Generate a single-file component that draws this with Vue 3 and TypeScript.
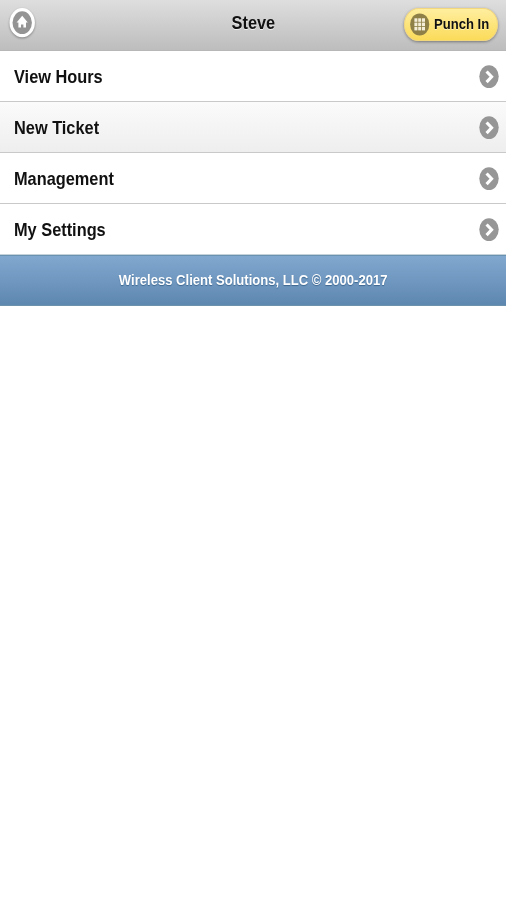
<script setup lang="ts">
interface MenuItem {
  label: string
  shaded?: boolean
}

const title = 'Steve'
const items: MenuItem[] = [
  { label: 'View Hours' },
  { label: 'New Ticket', shaded: true },
  { label: 'Management' },
  { label: 'My Settings' },
]
const dots = [0, 1, 2]
</script>

<template>
  <div class="page">
    <header class="header">
      <button class="home" aria-label="Home">
        <svg width="30" height="34" viewBox="0 0 30 34">
          <ellipse cx="15.2" cy="16.7" rx="12.7" ry="14.6" fill="#fff" />
          <ellipse cx="15.2" cy="16.7" rx="9.7" ry="11.4" fill="#949494" />
          <path d="M15.2 9.8 L20.8 16.4 H19 V21.6 H16.4 V18.6 H14 V21.6 H11.4 V16.4 H9.6 Z" fill="#fff" />
        </svg>
      </button>
      <h1 class="title"><span class="narrow">{{ title }}</span></h1>
      <button class="punch">
        <svg class="grid-icon" width="20" height="24" viewBox="0 0 20 24">
          <ellipse cx="9.7" cy="12.4" rx="9.6" ry="11" fill="#8f8048" />
          <template v-for="row in dots" :key="row">
            <rect
              v-for="col in dots"
              :key="col"
              :x="4.4 + col * 3.8"
              :y="6.3 + row * 4.3"
              width="3"
              height="3.5"
              fill="#f4eed9"
            />
          </template>
        </svg>
        <span class="narrow left punch-label">Punch In</span>
      </button>
    </header>

    <nav class="list">
      <a v-for="item in items" :key="item.label" class="row" :class="{ shaded: item.shaded }">
        <span class="narrow left">{{ item.label }}</span>
        <svg width="20" height="24" viewBox="0 0 20 24">
          <ellipse cx="10" cy="12.6" rx="9.7" ry="11.4" fill="#969696" />
          <path d="M7.6 7.5 L12.6 12.8 L7.6 18.1" fill="none" stroke="#fff" stroke-width="3.1" />
        </svg>
      </a>
    </nav>

    <footer class="footer">
      <span class="narrow">Wireless Client Solutions, LLC © 2000-2017</span>
    </footer>
  </div>
</template>

<style>
body {
  margin: 0;
  background: #fff;
}
</style>

<style scoped>
.page {
  min-height: 900px;
  background: #fff;
  color: #111;
  font-family: "Liberation Sans", Arial, sans-serif;
  font-weight: bold;
}

.narrow {
  display: inline-block;
  white-space: nowrap;
  transform: scaleX(0.86);
}

.left {
  transform-origin: left center;
}

button {
  padding: 0;
  border: 0;
  background: none;
  color: inherit;
  font: inherit;
}

.header {
  box-sizing: border-box;
  height: 51px;
  display: grid;
  grid-template-columns: 102px 1fr 102px;
  border-bottom: 1px solid #b7b7b7;
  background: linear-gradient(#dedede, #bdbdbd);
}

.home {
  width: 30px;
  height: 34px;
  margin: 6px 0 0 7px;
}

.home svg {
  display: block;
  overflow: visible;
  filter: drop-shadow(0 1px 1px rgba(0, 0, 0, 0.35));
}

.title {
  margin: 11px 0 0;
  font-size: 19px;
  line-height: 23px;
  text-align: center;
  text-shadow: 0 1px 0 #eee;
}

.punch {
  box-sizing: border-box;
  width: 94px;
  height: 33px;
  margin: 8px 0 0;
  padding: 0 0 1px 5px;
  display: flex;
  align-items: center;
  gap: 4px;
  border: 1px solid #f3d77c;
  border-radius: 15px / 17px;
  background: linear-gradient(#ffee9f, #fbdb59);
  box-shadow: 0 1px 3px rgba(0, 0, 0, 0.4);
  font-size: 15.2px;
  text-shadow: 0 1px 0 #fff3b5;
}

.punch-label {
  padding-bottom: 2px;
}

.grid-icon {
  flex: none;
}

.row {
  box-sizing: border-box;
  height: 51px;
  padding: 0 7px 0 14px;
  display: flex;
  align-items: center;
  justify-content: space-between;
  border-bottom: 1px solid #c9c9c9;
  font-size: 19px;
  line-height: 23px;
}

.row.shaded {
  background: linear-gradient(#fbfbfb, #eeeeee);
}

.row:last-child {
  border-bottom-color: #c6d2d9;
}

.footer {
  box-sizing: border-box;
  height: 51px;
  display: flex;
  justify-content: center;
  padding-top: 15px;
  border-top: 1px solid #6991b0;
  border-bottom: 1px solid #6c91ad;
  background: linear-gradient(#81a8cf, #5e87b0);
  color: #fff;
  font-size: 15.2px;
  line-height: 18px;
  text-shadow: 0 1px 1px #3e6790;
}
</style>
